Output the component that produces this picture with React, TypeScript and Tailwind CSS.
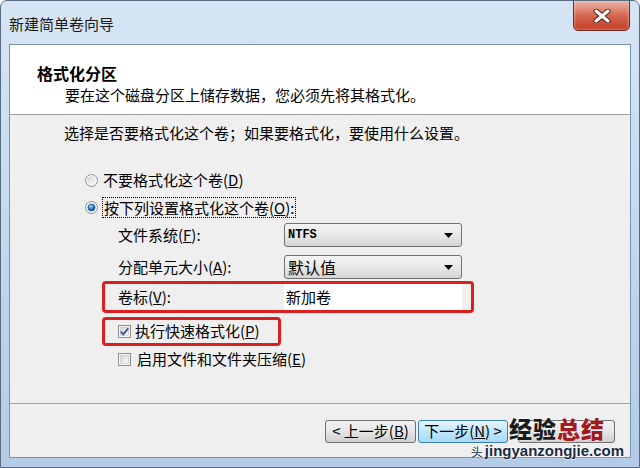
import React from "react";

function Radio({ checked }: { checked?: boolean }) {
  const id = checked ? "rc" : "ru";
  return (
    <svg width="13" height="13" viewBox="0 0 13 13" className="shrink-0">
      <defs>
        <linearGradient id={`${id}-ring`} x1="0" y1="0" x2="1" y2="1">
          <stop offset="0" stopColor="#d4d4d4" />
          <stop offset="1" stopColor="#fbfbfb" />
        </linearGradient>
        <radialGradient id={`${id}-dot`} cx="0.4" cy="0.35" r="0.7">
          <stop offset="0" stopColor="#a9e0ff" />
          <stop offset="0.5" stopColor="#2a7fcf" />
          <stop offset="1" stopColor="#0d3f80" />
        </radialGradient>
      </defs>
      <circle cx="6.5" cy="6.5" r="6" fill="#f6f6f6" stroke="#8e8f8f" />
      <circle cx="6.5" cy="6.5" r="4.3" fill={`url(#${id}-ring)`} />
      {checked && <circle cx="6.5" cy="6.5" r="3.6" fill={`url(#${id}-dot)`} stroke="#1a4a86" strokeWidth="0.5" />}
    </svg>
  );
}

function Check({ checked }: { checked?: boolean }) {
  const id = checked ? "cc" : "cu";
  return (
    <svg width="13" height="13" viewBox="0 0 13 13" className="shrink-0">
      <defs>
        <linearGradient id={`${id}-in`} x1="0" y1="0" x2="1" y2="1">
          <stop offset="0" stopColor="#d6d6d6" />
          <stop offset="1" stopColor="#f8f8f8" />
        </linearGradient>
      </defs>
      <rect x="0.5" y="0.5" width="12" height="12" fill="#f4f4f4" stroke="#8e8f8f" />
      <rect x="2.5" y="2.5" width="8" height="8" fill={`url(#${id}-in)`} stroke="#c4c4c4" strokeWidth="0.6" />
      {checked && (
        <path d="M2.8 6.6 L5.3 9.3 L10.3 3.2" fill="none" stroke="#3a4f8c" strokeWidth="1.8" />
      )}
    </svg>
  );
}

function Combo({ children }: { children: React.ReactNode }) {
  return (
    <div className="flex h-[24px] w-[178px] items-center justify-between rounded-[3px] border border-[#707070] bg-gradient-to-b from-[#f3f3f3] via-[#e9e9e9] to-[#d4d4d4] pl-[3px] pr-[8px]">
      {children}
      <svg width="9" height="5" viewBox="0 0 9 5">
        <path d="M0 0 H9 L4.5 5 Z" fill="#000" />
      </svg>
    </div>
  );
}

function Btn({ children, active, wide }: { children?: React.ReactNode; active?: boolean; wide?: boolean }) {
  if (active) {
    return (
      <div className="flex h-[23px] w-[90px] items-center justify-center rounded-[3px] border border-[#3c7fb1] bg-gradient-to-b from-[#e8f6fd] via-[#bee6fd] to-[#a7d9f5] text-[15px]">
        {children}
      </div>
    );
  }
  return (
    <div
      className={
        wide
          ? "flex h-[23px] w-[97px] items-center justify-center rounded-[3px] border border-[#707070] bg-gradient-to-b from-[#f2f2f2] via-[#e6e6e6] to-[#cfcfcf] text-[15px]"
          : "flex h-[23px] w-[91px] items-center justify-center rounded-[3px] border border-[#707070] bg-gradient-to-b from-[#f2f2f2] via-[#e6e6e6] to-[#cfcfcf] text-[15px]"
      }
    >
      {children}
    </div>
  );
}

export default function App() {
  return (
    <div className="relative flex h-[468px] w-[640px] flex-col overflow-hidden rounded-t-[7px] border border-[#5a6b80] bg-gradient-to-b from-[#d6e5f4] via-[#c4d8ee] to-[#b3cbe6] font-['Noto_Sans_CJK_SC','Noto_Sans',sans-serif] text-[#000]">
      {/* title bar */}
      <div className="flex h-[43px] shrink-0 items-center pl-[8px] pt-[3px] text-[15px] text-[#1a1a1a]">
        新建简单卷向导
      </div>
      <div className="absolute right-[9px] top-[-1px] flex h-[31px] w-[57px] items-center justify-center rounded-b-[5px] border border-[#6a2b22] bg-gradient-to-b from-[#eab3a6] via-[#d4674f] to-[#c23b24] shadow-[inset_0_0_3px_rgba(255,255,255,0.6)]">
        <svg width="18" height="14" viewBox="0 0 18 14">
          <path d="M3 2 L15 12 M15 2 L3 12" stroke="#5a1f18" strokeWidth="5" strokeLinecap="round" />
          <path d="M3 2 L15 12 M15 2 L3 12" stroke="#fff" strokeWidth="3" strokeLinecap="round" />
        </svg>
      </div>

      {/* client */}
      <div className="mx-[8px] mb-[9px] flex flex-1 flex-col border border-[#7c93ad]">
        <div className="flex h-[70px] shrink-0 flex-col border-b border-[#a0a0a0] bg-white pl-[27px] pt-[17px]">
          <div className="text-[16px] font-bold leading-[22px]">格式化分区</div>
          <div className="pl-[28px] text-[15px] leading-[22px]">
            要在这个磁盘分区上储存数据，您必须先将其格式化。
          </div>
        </div>

        <div className="flex flex-1 flex-col border-b border-[#a0a0a0] bg-[#f0efef] text-[15px]">
          <div className="mt-[8px] h-[20px] pl-[54px] leading-[20px]">
            选择是否要格式化这个卷；如果要格式化，要使用什么设置。
          </div>
          <div className="mt-[24px] flex flex-col pl-[75px]">
            <div className="flex h-[27px] items-center gap-[5px]">
              <Radio />
              <span>
                不要格式化这个卷(<u>D</u>)
              </span>
            </div>
            <div className="flex h-[27px] items-center gap-[4px]">
              <Radio checked />
              <span className="border border-dotted border-[#000] px-[1px] leading-[19px]">
                按下列设置格式化这个卷(<u>O</u>):
              </span>
            </div>
            <div className="mt-[2px] flex h-[24px] items-center pl-[33px]">
              <span className="w-[166px]">
                文件系统(<u>F</u>):
              </span>
              <Combo>
                <span className="font-['Liberation_Mono',monospace] text-[12px] font-bold">NTFS</span>
              </Combo>
            </div>
            <div className="mt-[8px] flex h-[24px] items-center pl-[33px]">
              <span className="w-[166px]">
                分配单元大小(<u>A</u>):
              </span>
              <Combo>
                <span className="text-[16px]">默认值</span>
              </Combo>
            </div>
            <div className="ml-[17px] mt-[2px] flex h-[32px] w-[372px] items-center rounded-[4px] border-[3px] border-[#dc1e1e] pl-[13px]">
              <span className="w-[166px]">
                卷标(<u>V</u>):
              </span>
              <div className="flex h-[26px] w-[178px] items-center bg-white pl-[2px]">新加卷</div>
            </div>
            <div className="ml-[17px] mt-[4px] flex h-[29px] w-[179px] items-center gap-[4px] rounded-[4px] border-[3px] border-[#dc1e1e] pl-[13px]">
              <Check checked />
              <span>
                执行快速格式化(<u>P</u>)
              </span>
            </div>
            <div className="flex h-[26px] items-center gap-[6px] pl-[33px]">
              <Check />
              <span>
                启用文件和文件夹压缩(<u>E</u>)
              </span>
            </div>
          </div>
        </div>

        <div className="relative flex h-[53px] shrink-0 items-start justify-end gap-[2px] bg-[#f0efef] pr-[15px] pt-[16px]">
          <Btn>&lt; 上一步(<u>B</u>)</Btn>
          <Btn active>下一步(<u>N</u>) &gt;</Btn>
          <div className="ml-[8px]">
            <Btn wide />
          </div>
          {/* watermark */}
          <div className="absolute right-[25px] top-[13px] text-[23px] font-black leading-none tracking-[1px] [text-shadow:0_0_2px_#fff]">
            <span className="text-[#1c1c1c]">经验</span>
            <span className="text-[#a01a1e]">总结</span>
          </div>
          <div className="absolute right-[6px] top-[39px] flex items-end text-[15px] font-bold leading-none text-[#1b2b44] [text-shadow:0_0_2px_#fff,0_0_2px_#fff]">
            <span className="mr-[2px] text-[12px] font-normal">头</span>
            <span className="font-['Liberation_Sans',sans-serif]">jingyanzongjie.com</span>
          </div>
        </div>
      </div>
    </div>
  );
}
